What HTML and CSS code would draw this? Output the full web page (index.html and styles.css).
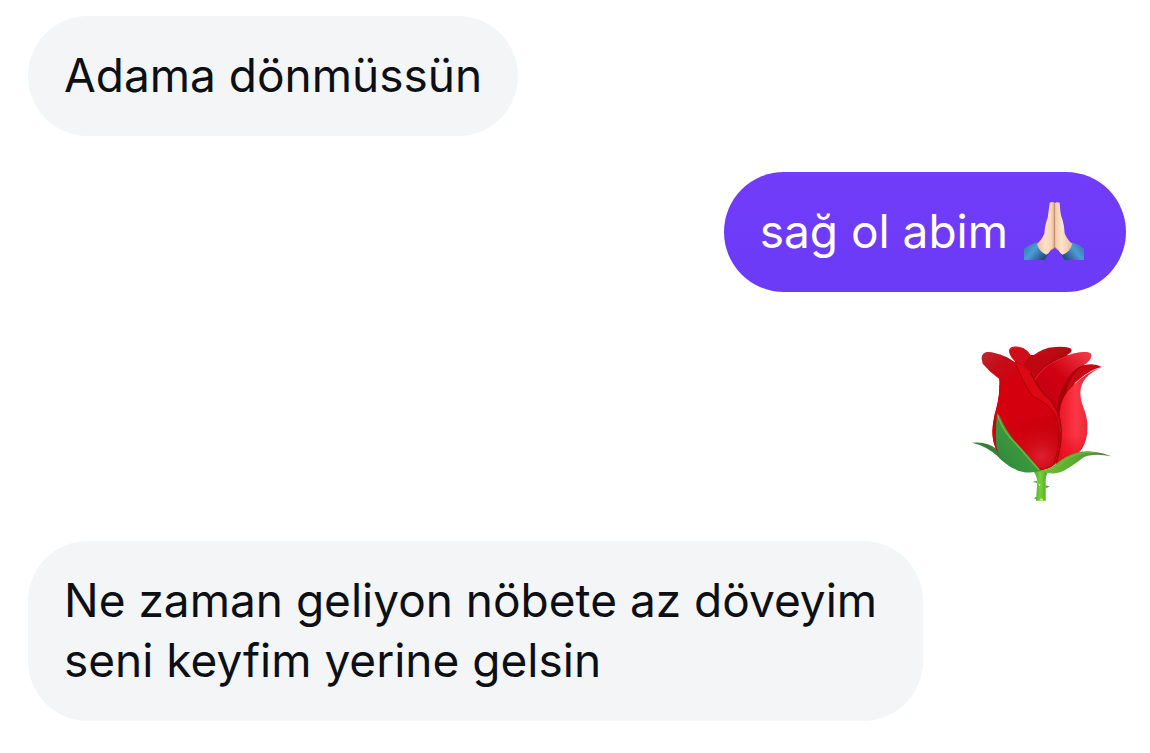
FILE: index.html
```html
<!DOCTYPE html>
<html lang="tr">
<head>
<meta charset="utf-8">
<meta name="viewport" content="width=device-width, initial-scale=1">
<title>Sohbet</title>
<link rel="stylesheet" href="styles.css">
</head>
<body>
<main class="chat">
  <p class="bubble bubble-in">Adama dönmüssün</p>
  <p class="bubble bubble-out"><span>sağ ol abim</span>
    <svg class="hands" viewBox="42 36 180 174" role="img" aria-label="Dua eden eller">
      <defs>
        <linearGradient id="skinL" x1="0" x2="1" y1="0" y2="0"><stop offset="0" stop-color="#eebf98"/><stop offset=".45" stop-color="#fbe0c5"/><stop offset=".8" stop-color="#f8d5b8"/><stop offset="1" stop-color="#d9a27c"/></linearGradient>
        <linearGradient id="skinR" x1="0" x2="1" y1="0" y2="0"><stop offset="0" stop-color="#f3caaa"/><stop offset=".4" stop-color="#fce3ca"/><stop offset="1" stop-color="#eabb95"/></linearGradient>
        <linearGradient id="cuffL" x1="0" x2="1" y1="0" y2=".6"><stop offset="0" stop-color="#356fa3"/><stop offset=".5" stop-color="#4b9cd6"/><stop offset="1" stop-color="#244e83"/></linearGradient>
        <linearGradient id="cuffR" x1="1" x2="0" y1="0" y2=".6"><stop offset="0" stop-color="#3270a6"/><stop offset=".5" stop-color="#4b9cd6"/><stop offset="1" stop-color="#244e83"/></linearGradient>
      </defs>
      <path fill="url(#cuffL)" d="M42 176Q62 162 84 157Q91 183 114 191Q109 203 104 210H42Z"/>
      <path fill="url(#cuffR)" d="M222 176Q205 162 184 157Q176 183 153 191Q158 203 164 210H222Z"/>
      <path fill="url(#skinL)" d="M119 39Q121 35 132 37L135 40V170Q130 177 122 181Q117 190 109 194Q89 187 81 163Q97 147 103 131Q105 102 113 83Q116 61 119 39Z"/>
      <path fill="url(#skinR)" d="M135 40Q138 35 149 38L151 64Q153 81 158 91Q163 108 164 130Q171 149 187 162Q179 187 158 194Q150 190 145 181Q139 177 135 170Z"/>
      <path fill="none" stroke="#b87d60" stroke-width="2" d="M134 40V171"/>
      <path fill="none" stroke="#d5936b" stroke-width="3" d="M134 171Q129 178 122 180M135 171Q139 178 145 180"/>
    </svg>
  </p>
  <svg class="rose" viewBox="30 30 432 468" role="img" aria-label="Gül">
    <defs>
      <linearGradient id="bud" x1="0" x2="1" y1="0" y2=".3"><stop offset="0" stop-color="#c4000b"/><stop offset=".25" stop-color="#d5000e"/><stop offset="1" stop-color="#c9000d"/></linearGradient>
      <radialGradient id="glow" cx="245" cy="365" r="110" gradientUnits="userSpaceOnUse"><stop offset="0" stop-color="#ef3c4a" stop-opacity=".55"/><stop offset="1" stop-color="#c9000d" stop-opacity="0"/></radialGradient>
      <linearGradient id="side" x1="0" x2="1" y1="0" y2="0"><stop offset="0" stop-color="#e80d20"/><stop offset=".45" stop-color="#fb3745"/><stop offset="1" stop-color="#d51325"/></linearGradient>
      <linearGradient id="sideLow" x1="0" x2="0" y1="0" y2="1"><stop offset=".4" stop-color="#e8001b" stop-opacity="0"/><stop offset="1" stop-color="#e5110c"/></linearGradient>
      <linearGradient id="fold" x1="0" x2=".9" y1="1" y2="0"><stop offset="0" stop-color="#c00010"/><stop offset=".55" stop-color="#cf0012"/><stop offset="1" stop-color="#ee3943"/></linearGradient>
      <linearGradient id="lip" x1="70" x2="150" y1="50" y2="150" gradientUnits="userSpaceOnUse"><stop offset="0" stop-color="#bd2832"/><stop offset=".45" stop-color="#c40d17"/><stop offset="1" stop-color="#d4000d"/></linearGradient>
      <linearGradient id="dark" x1="0" x2="1" y1="0" y2="1"><stop offset="0" stop-color="#cf1018"/><stop offset="1" stop-color="#9d0009"/></linearGradient>
      <linearGradient id="leafL" x1="0" x2="1" y1="1" y2="0"><stop offset="0" stop-color="#2f8540"/><stop offset=".5" stop-color="#3b9a3b"/><stop offset="1" stop-color="#86b43c"/></linearGradient>
      <linearGradient id="leafR" x1="0" x2="1"><stop offset="0" stop-color="#70c02f"/><stop offset=".5" stop-color="#58a931"/><stop offset="1" stop-color="#4b7b38"/></linearGradient>
      <linearGradient id="stem" x1="0" x2="1"><stop offset="0" stop-color="#3d9b2c"/><stop offset=".45" stop-color="#79ce38"/><stop offset="1" stop-color="#47a228"/></linearGradient>
    </defs>
    <path fill="url(#stem)" d="M218 405H267Q257 419 257 440V497H228L232 439Q230 420 218 405Z"/>
    <path fill="#4a9d2e" d="M231 438L218 440L231 444ZM257 451L270 455L257 459ZM230 485L221 490L229 492Z"/>
    <path fill="#d8efbd" d="M236 446l6 3l-5 5zM240 491h9v5h-9z"/>
    <path fill="#377f38" d="M36 323Q82 318 110 342Q136 358 163 399Q135 389 113 364Q80 333 36 323Z"/>
    <path fill="#ac000c" d="M160 60L218 60L300 50L370 80L345 140L320 230L190 190Z"/>
    <path fill="url(#bud)" d="M118 131Q112 90 180 94Q240 70 340 120L298 260Q312 350 288 385Q265 408 225 405Q130 385 108 342Q90 303 101 256Q121 195 118 131Z"/>
    <path fill="url(#dark)" d="M210 72Q229 48 266 38Q326 31 335 44Q337 57 300 67Q257 85 224 128Q199 104 195 90Z"/>
    <path fill="#be0711" d="M187 92Q207 60 244 60Q275 62 279 74Q244 91 225 129Z"/>
    <path fill="#cf0c18" d="M148 53C142 32 170 31 190 39Q206 48 214 62Q203 69 190 91L170 82Q151 68 148 53Z"/>
    <path fill="#a50009" d="M289 206Q306 118 365 88L400 100Q353 120 329 169Q302 207 298 250Z"/>
    <path fill="url(#fold)" d="M223 139Q248 96 296 73Q346 48 380 51C402 52 397 72 376 88Q308 111 290 223Q252 187 223 139Z"/>
    <path fill="#c90814" d="M370 91Q405 83 425 96Q390 104 359 132Q334 150 316 177Q332 116 370 91Z"/>
    <path fill="url(#side)" d="M298 247Q299 188 340 151Q377 112 425 97C385 115 362 138 361 174C361 207 380 228 382 265C385 312 371 339 355 354Q325 381 286 394Q310 320 298 247Z"/>
    <path fill="url(#sideLow)" d="M298 247Q350 225 381 253C386 312 371 339 355 354Q325 381 286 394Q310 320 298 247Z"/>
    <path fill="url(#lip)" d="M65 72C64 50 84 48 104 54Q137 61 167 83Q183 131 218 182Q279 206 295 257L230 300L104 240Q124 175 118 132Q90 112 68 86Z"/>
    <path fill="url(#bud)" d="M104 236Q170 190 250 194Q285 220 297 257Q309 327 283 389Q265 408 225 405Q130 385 108 342Q90 303 104 236Z"/>
    <path fill="#d4000d" d="M105 234Q120 180 118 150L195 148L218 182Q270 202 287 236L250 250L104 250Z"/>
    <path fill="url(#glow)" d="M110 235Q220 180 291 260Q309 350 284 386Q225 420 160 370Q125 335 110 235Z"/>
    <path fill="#dc0814" d="M166 83Q196 91 210 112Q226 148 250 176Q286 205 299 254Q309 320 290 380L283 389Q309 327 295 257Q279 206 218 182Q183 131 166 83Z"/>
    <path fill="none" stroke="#a2000a" stroke-width="4" d="M212 114Q228 149 252 177Q288 205 300 254Q311 314 289 383"/>
    <path fill="none" stroke="#ae000a" stroke-width="3" d="M168 90Q185 135 217 184Q276 208 292 258Q305 325 281 387"/>
    <path fill="none" stroke="#ed323b" stroke-width="2" d="M224 135Q249 94 296 73Q346 51 383 53M151 46Q157 35 179 37"/>
    <path fill="url(#leafL)" d="M112 233Q121 246 132 270Q156 314 182 336Q213 372 244 408Q196 419 166 403Q122 386 109 334Q105 276 112 233Z"/>
    <path fill="none" stroke="#7fb03e" stroke-width="4" d="M113 240Q130 292 166 324Q201 366 237 405"/>
    <path fill="url(#leafR)" d="M244 408Q281 398 298 379Q345 344 399 350Q432 354 455 364Q397 353 369 368Q331 398 303 411Q277 421 244 408Z"/>
    <path fill="none" stroke="#86c34c" stroke-width="2" d="M251 407Q292 400 313 377Q352 349 405 353"/>
  </svg>
  <p class="bubble bubble-in">Ne zaman geliyon nöbete az döveyim seni keyfim yerine gelsin</p>
</main>
</body>
</html>
```

FILE: styles.css
```css
* {
  box-sizing: border-box;
}

body {
  margin: 0;
  background: #ffffff;
  font-family: Inter, "Liberation Sans", sans-serif;
}

.chat {
  display: flex;
  flex-direction: column;
  gap: 36px;
  padding: 16px 24px 32px 28px;
}

.bubble {
  max-width: 81.5%;
  margin: 0;
  padding: 29px 36px 31px;
  border-radius: 60px;
  font-size: 46px;
  line-height: 60px;
}

.bubble-in {
  align-self: flex-start;
  background: #f3f5f7;
  color: #0c1014;
}

.bubble-out {
  display: flex;
  align-items: center;
  align-self: flex-end;
  gap: 16px;
  padding-right: 42px;
  background: linear-gradient(#713cfb, #6b3bf6);
  color: #ffffff;
}

.hands {
  width: 60px;
  height: 58px;
}

.rose {
  align-self: flex-end;
  width: 144px;
  height: 156px;
  margin: 17px 12px 4px 0;
}
```
